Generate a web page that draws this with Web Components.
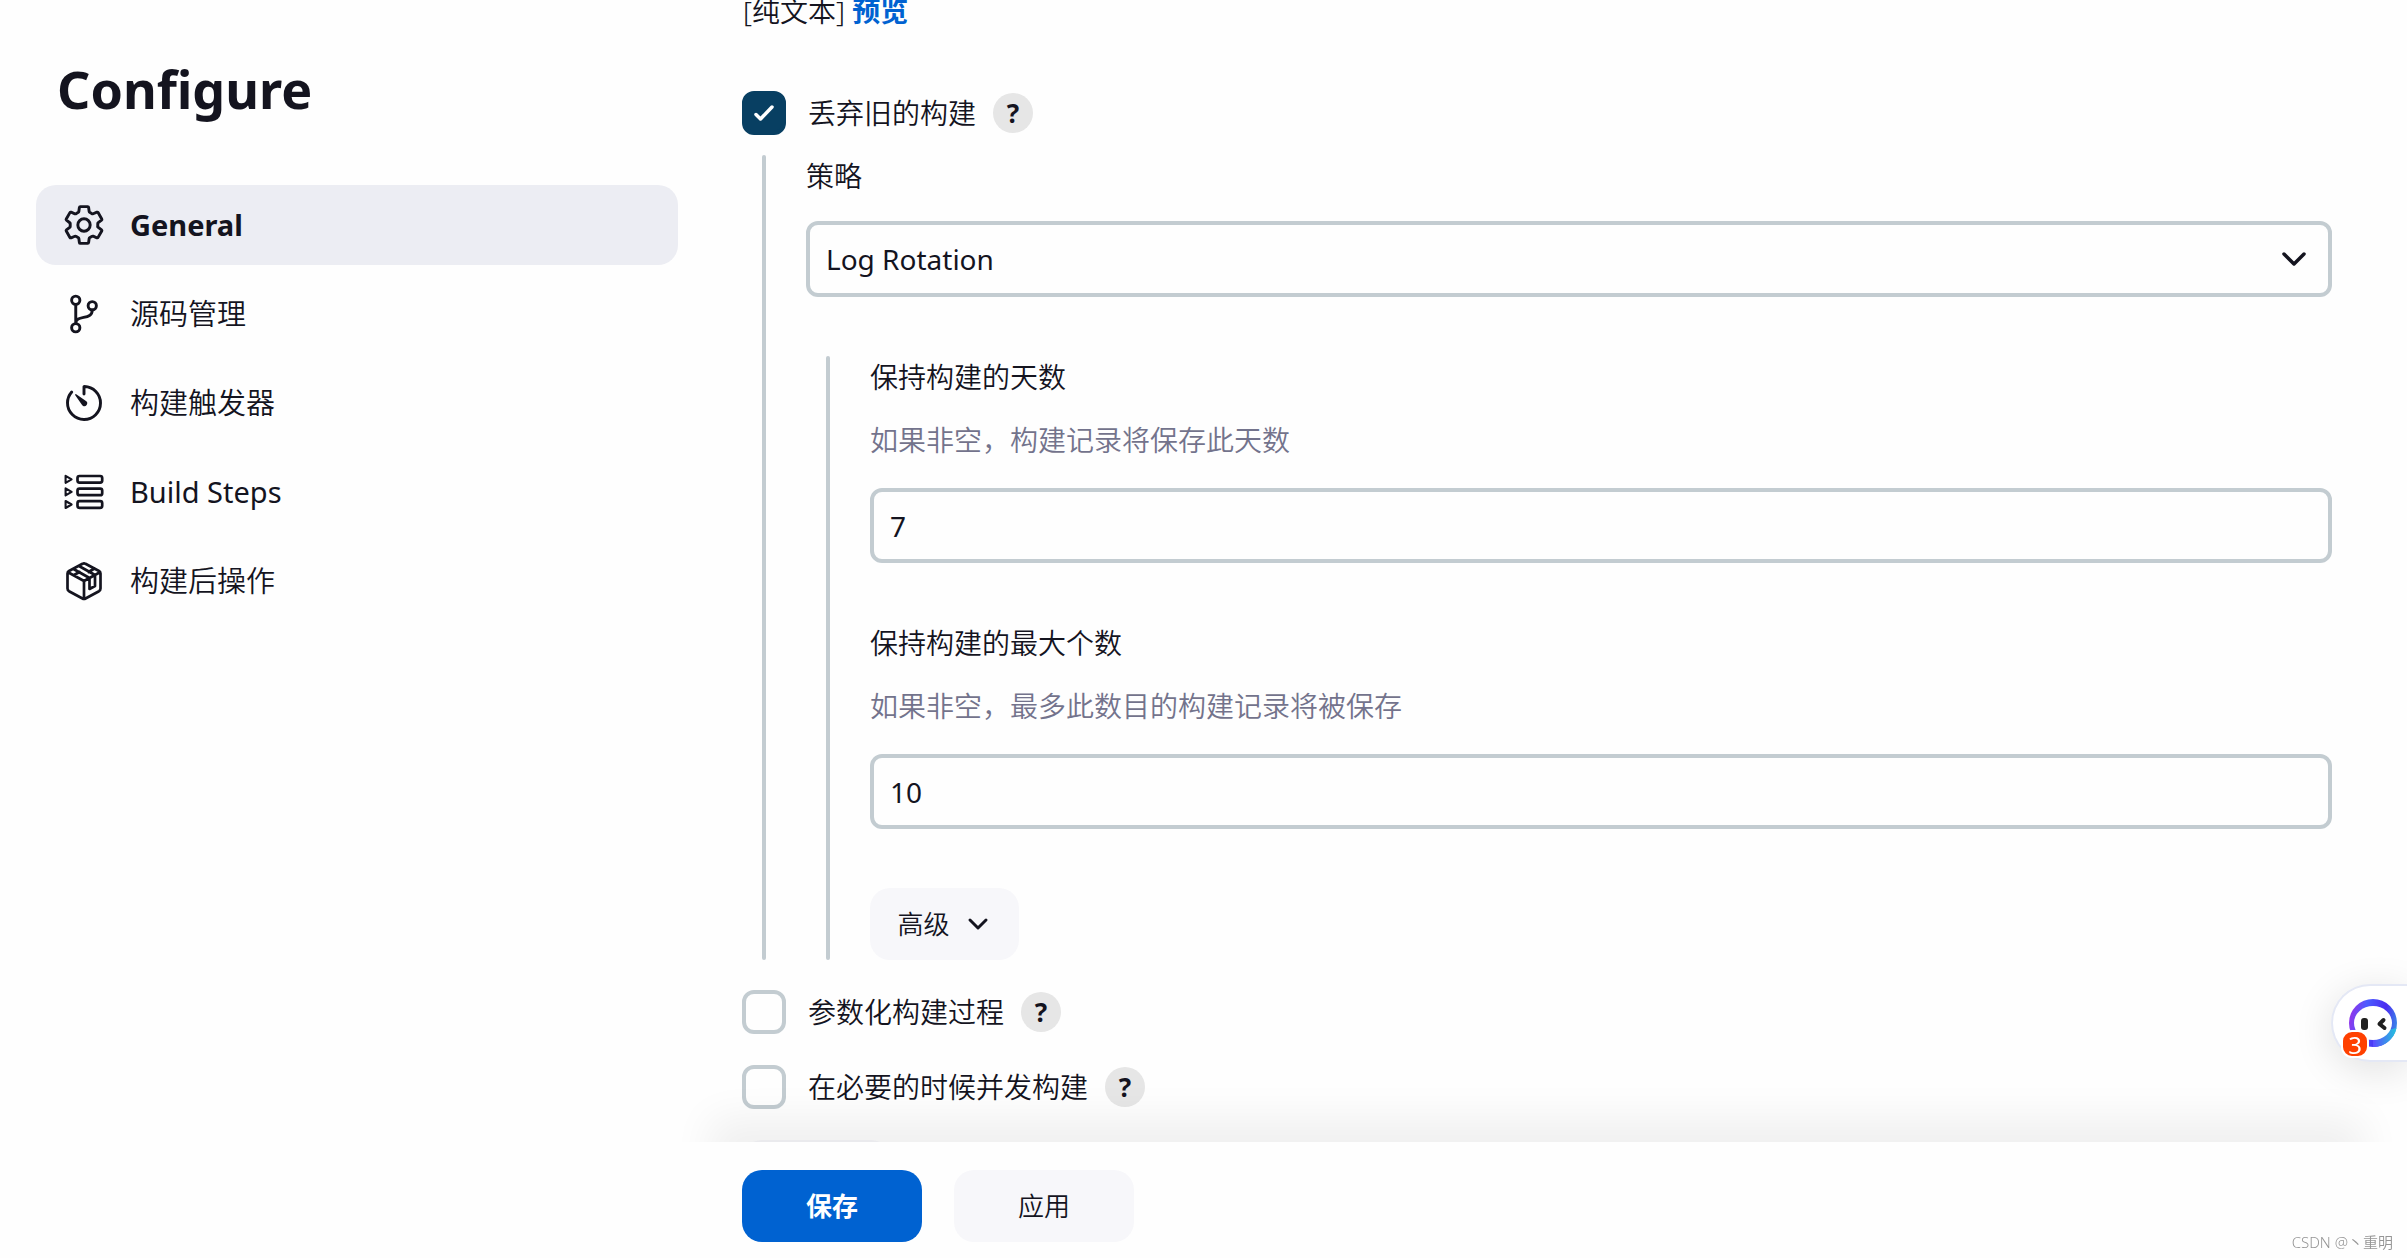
<!DOCTYPE html>
<html lang="zh-CN">
<head>
<meta charset="utf-8">
<title>Configure</title>
<style>
  :root {
    --text: #14141f;
    --muted: #73738c;
    --line: #c3ccd1;
    --accent: #0062d1;
    --soft: #f7f7fa;
  }
  body {
    margin: 0;
    background: #fefefe;
    color: var(--text);
    font: 350 28px/42px "Noto Sans", "Noto Sans CJK SC", sans-serif;
  }
</style>
</head>
<body>
<config-page></config-page>

<template id="config-page">
  <style>
    :host { display: flex; height: 100vh; overflow: hidden; }
    aside { flex: 0 0 642px; padding: 56px 64px 0 36px; }
    h1 { margin: 0 0 64px; padding-left: 21px; font-size: 52px; line-height: 65px; font-weight: 700; }
    nav { display: flex; flex-direction: column; gap: 9px; }
    main { flex: 1; min-width: 0; padding-right: 75px; display: flex; flex-direction: column; }
    form { flex: 1; min-height: 0; overflow: hidden; display: flex; flex-direction: column; }
    .format { line-height: 22px; padding-left: 1px; margin-bottom: 69px; flex: none; }
    .format a { color: var(--accent); font-weight: 700; text-decoration: none; }
    check-row { flex: none; }
    .group { flex: none; margin: 20px 0 30px; }
    .later { flex: none; display: flex; flex-direction: column; align-items: flex-start; gap: 31px; }
  </style>
  <aside>
    <h1>Configure</h1>
    <nav>
      <nav-item current>
        <svg slot="icon" viewBox="0 0 512 512" fill="none" stroke="currentColor" stroke-width="34" stroke-linecap="round" stroke-linejoin="round"><circle cx="256" cy="256" r="72"/><path d="M416.4 256a154 154 0 01-1.5 20.8l45.2 35.5a10.8 10.8 0 012.4 13.7l-42.8 74a10.8 10.8 0 01-13.1 4.6l-44.9-18.1a16 16 0 00-15.2 1.8A164 164 0 01325 400.8a16 16 0 00-8.8 12.1l-6.7 47.9a11 11 0 01-10.7 9.2h-85.5a11 11 0 01-10.7-8.9l-6.7-47.8a16 16 0 00-9-12.2 155 155 0 01-21.5-12.6 16 16 0 00-15.1-1.7l-44.9 18.1a10.8 10.8 0 01-13.1-4.6l-42.8-74a10.8 10.8 0 012.4-13.7l38.2-30a16 16 0 006-14.1c-.3-4.2-.6-8.3-.6-12.5s.2-8.3.6-12.4a16 16 0 00-6.1-13.9l-38.2-30A10.8 10.8 0 0149.5 186l42.8-74a10.8 10.8 0 0113.1-4.6l44.9 18.1a16 16 0 0015.2-1.8A164 164 0 01187 111.2a16 16 0 008.8-12.1l6.7-47.9A11 11 0 01213.2 42h85.6a11 11 0 0110.7 8.9l6.7 47.8a16 16 0 009 12.2 155 155 0 0121.5 12.6 16 16 0 0015.1 1.7l44.9-18.1a10.8 10.8 0 0113.1 4.6l42.8 74a10.8 10.8 0 01-2.5 13.8l-38.2 30a16 16 0 00-6 14.1c.3 4.1.5 8.3.5 12.4z"/></svg>
        General</nav-item>
      <nav-item>
        <svg slot="icon" viewBox="0 0 512 512" fill="none" stroke="currentColor" stroke-width="34" stroke-linecap="round"><circle cx="160" cy="96" r="48"/><circle cx="160" cy="416" r="48"/><circle cx="352" cy="160" r="48"/><path d="M160 368V144M352 208c0 128-192 48-192 160"/></svg>
        源码管理</nav-item>
      <nav-item>
        <svg slot="icon" viewBox="0 0 512 512"><path d="M112.9 128A191.9 191.9 0 0064 254c-1.2 106.400 85.700 193.800 192 194 106.200.2 192-85.800 192-192 0-104.500-83.600-189.600-187.500-192a4.400 4.400 0 00-4.500 4.400V152" fill="none" stroke="currentColor" stroke-width="34" stroke-linecap="round"/><path fill="currentColor" d="M233.400 278.600l-79-113a8.100 8.100 0 0111.300-11.300l113 79a32.500 32.500 0 01-37.300 53.300 33 33 0 01-8-8z"/></svg>
        构建触发器</nav-item>
      <nav-item latin>
        <svg slot="icon" viewBox="0 0 44 44" fill="none" stroke="currentColor" stroke-width="2.700" stroke-linejoin="round"><rect x="15.500" y="6" width="24.700" height="6.600" rx="2"/><rect x="15.500" y="18.600" width="24.700" height="6.600" rx="2"/><rect x="15.500" y="31.200" width="24.700" height="6.600" rx="2"/><g stroke-width="2.100"><path d="M3.600 5.800l6 3.500-6 3.500zM3.600 18.400l6 3.500-6 3.500zM3.600 31l6 3.500-6 3.500z"/></g></svg>
        Build Steps</nav-item>
      <nav-item>
        <svg slot="icon" viewBox="0 0 44 44" fill="none" stroke="currentColor" stroke-width="2.700" stroke-linejoin="round" stroke-linecap="round"><path d="M20.500 4.800a3 3 0 013 0L37 12a3 3 0 011.500 2.600v15a3 3 0 01-1.500 2.600L23.500 39.500a3 3 0 01-3 0L7 32.200a3 3 0 01-1.500-2.600v-15A3 3 0 017 12zM6.500 13.500L22 22l15.500-8.500M22 22v17M11.500 10l16 9v11l5.500-3V16L17 7M12 16l5.500-3M26.500 13l6-3.500"/></svg>
        构建后操作</nav-item>
    </nav>
  </aside>
  <main>
    <form>
      <div class="format">[纯文本] <a href="#preview">预览</a></div>
      <check-row checked>丢弃旧的构建</check-row>
      <indent-group class="group">
        <select-field label="策略" value="Log Rotation"></select-field>
        <indent-group>
          <text-field label="保持构建的天数" hint="如果非空，构建记录将保存此天数" value="7"></text-field>
          <text-field label="保持构建的最大个数" hint="如果非空，最多此数目的构建记录将被保存" value="10"></text-field>
          <push-button chevron>高级</push-button>
        </indent-group>
      </indent-group>
      <div class="later">
        <check-row>参数化构建过程</check-row>
        <check-row>在必要的时候并发构建</check-row>
        <push-button chevron></push-button>
      </div>
    </form>
    <save-bar>
      <push-button primary wide>保存</push-button>
      <push-button wide>应用</push-button>
    </save-bar>
  </main>
  <chat-bubble count="3"></chat-bubble>
  <water-mark>CSDN @丶重明</water-mark>
</template>

<template id="nav-item">
  <style>
    :host { display: block; }
    a { display: flex; align-items: center; gap: 24px; height: 80px; box-sizing: border-box; padding: 0 26px; border-radius: 20px; color: inherit; text-decoration: none; font-size: 29px; }
    :host([latin]) a { font-weight: 400; }
    :host([current]) a { background: #ecedf3; font-weight: 700; }
    ::slotted(svg) { width: 44px; height: 44px; flex: none; display: block; }
  </style>
  <a href="#section"><slot name="icon"></slot><span><slot></slot></span></a>
</template>

<template id="check-row">
  <style>
    :host { display: flex; align-items: center; height: 44px; }
    label { display: flex; align-items: center; gap: 22px; }
    .box { display: grid; width: 44px; height: 44px; }
    input, svg { grid-area: 1 / 1; }
    input { appearance: none; margin: 0; box-sizing: border-box; width: 44px; height: 44px; border: 4px solid var(--line); border-radius: 12px; background: #fefefe; }
    input:checked { background: #083f62; border-color: #083f62; }
    svg { width: 44px; height: 44px; visibility: hidden; pointer-events: none; }
    input:checked + svg { visibility: visible; }
    button { margin: 0 0 0 17px; width: 40px; height: 40px; padding: 0; border: 0; border-radius: 50%; background: #e6e6e6; color: var(--text); font: 700 26px/40px "Noto Sans", sans-serif; }
  </style>
  <label><span class="box"><input type="checkbox"><svg viewBox="0 0 44 44" fill="none" stroke="#fff" stroke-width="3.500" stroke-linecap="round" stroke-linejoin="round"><path d="M14 23.500l4.500 4.500L30 16"/></svg></span><span><slot></slot></span></label>
  <button type="button">?</button>
</template>

<template id="indent-group">
  <style>
    :host { display: flex; flex-direction: column; align-items: stretch; gap: 59px; position: relative; padding-left: 64px; }
    :host::before { content: ""; position: absolute; left: 20px; top: 0; bottom: 0; width: 4px; border-radius: 2px; background: var(--line); }
  </style>
  <slot></slot>
</template>

<template id="select-field">
  <style>
    :host { display: block; }
    label { display: block; margin-bottom: 24px; }
    .wrap { display: grid; align-items: center; }
    select, svg { grid-area: 1 / 1; }
    select { appearance: none; width: 100%; height: 76px; box-sizing: border-box; padding: 0 64px 0 16px; border: 4px solid var(--line); border-radius: 12px; background: #fefefe; color: inherit; font: inherit; font-weight: 400; }
    svg { justify-self: end; margin-right: 23px; width: 30px; height: 30px; pointer-events: none; }
  </style>
  <label for="control"></label>
  <div class="wrap"><select id="control"><option></option></select><svg viewBox="0 0 30 30" fill="none" stroke="currentColor" stroke-width="3.500" stroke-linecap="round" stroke-linejoin="round"><path d="M5 10l10 10 10-10"/></svg></div>
</template>

<template id="text-field">
  <style>
    :host { display: block; }
    label { display: block; margin-bottom: 21px; }
    p { margin: 0 0 27px; color: var(--muted); }
    input { display: block; width: 100%; height: 75px; box-sizing: border-box; padding: 0 16px; border: 4px solid var(--line); border-radius: 12px; background: #fefefe; color: inherit; font: inherit; font-weight: 400; }
  </style>
  <label for="control"></label>
  <p id="hint"></p>
  <input id="control" type="text" aria-describedby="hint">
</template>

<template id="push-button">
  <style>
    :host { display: flex; }
    button { display: flex; align-items: center; justify-content: center; gap: 14px; min-width: 149px; height: 72px; padding: 0 26px; border: 0; border-radius: 20px; background: var(--soft); color: inherit; font: inherit; font-size: 26px; }
    :host([wide]) button { min-width: 180px; }
    :host([primary]) button { background: var(--accent); color: #fff; font-weight: 700; }
    svg { display: none; width: 28px; height: 28px; }
    :host([chevron]) svg { display: block; }
  </style>
  <button type="button"><span><slot></slot></span><svg viewBox="0 0 28 28" fill="none" stroke="currentColor" stroke-width="3" stroke-linecap="round" stroke-linejoin="round"><path d="M6 10l8 8 8-8"/></svg></button>
</template>

<template id="save-bar">
  <style>
    :host { display: flex; gap: 32px; padding: 28px 0 16px; position: relative; flex: none; }
    :host::before { content: ""; position: absolute; inset: 0 -32px; box-shadow: 0 -24px 40px rgba(0, 0, 0, .06); clip-path: inset(-80px -80px 100% -80px); pointer-events: none; }
  </style>
  <slot></slot>
</template>

<template id="chat-bubble">
  <style>
    :host { position: fixed; right: 0; bottom: 196px; }
    button { position: relative; display: flex; align-items: center; box-sizing: border-box; width: 76px; height: 78px; padding: 0 0 0 15px; border: 2px solid #e4e8f5; border-right: 0; border-radius: 39px 0 0 39px; background: #fff; box-shadow: 0 8px 40px rgba(0, 0, 0, .12); }
    svg { width: 50px; height: 50px; flex: none; }
    span { position: absolute; left: 8px; bottom: 2px; width: 24px; height: 24px; border: 2px solid #fff; border-radius: 11px; background: #ff4000; color: #fff; font: 24px/26px "Noto Sans", sans-serif; text-align: center; }
  </style>
  <button type="button">
    <svg viewBox="0 0 50 50"><defs><linearGradient id="ring" x1="0" y1=".4" x2="1" y2=".6"><stop offset="0" stop-color="#9333ea"/><stop offset=".3" stop-color="#4b5cff"/><stop offset=".7" stop-color="#4a2bf0"/><stop offset="1" stop-color="#3b8be8"/></linearGradient><linearGradient id="low" x1="0" y1="0" x2="1" y2="0"><stop offset="0" stop-color="#5b4bff"/><stop offset="1" stop-color="#22c4dc"/></linearGradient></defs><circle cx="25" cy="25" r="24" fill="url(#ring)"/><path d="M25 49a24 24 0 0023.500-19L40 32 25 40z" fill="url(#low)"/><ellipse cx="25" cy="25" rx="19" ry="17" fill="#fff"/><rect x="13" y="20" width="7" height="12" rx="3" fill="#1f1f1f"/><path d="M35.500 22l-4 4 5 4" fill="none" stroke="#1f1f1f" stroke-width="4" stroke-linecap="round" stroke-linejoin="round"/></svg>
    <span></span>
  </button>
</template>

<template id="water-mark">
  <style>
    :host { position: fixed; right: 14px; bottom: 6px; font-size: 15px; line-height: 20px; color: #959595; }
  </style>
  <slot></slot>
</template>

<script>
  class TemplateElement extends HTMLElement {
    constructor() {
      super();
      const root = this.attachShadow({ mode: "open" });
      root.append(document.getElementById(this.localName).content.cloneNode(true));
    }
    part$(selector) { return this.shadowRoot.querySelector(selector); }
  }
  customElements.define("nav-item", class extends TemplateElement {});
  customElements.define("indent-group", class extends TemplateElement {});
  customElements.define("push-button", class extends TemplateElement {});
  customElements.define("save-bar", class extends TemplateElement {});
  customElements.define("water-mark", class extends TemplateElement {});
  customElements.define("check-row", class extends TemplateElement {
    connectedCallback() { this.part$("input").checked = this.hasAttribute("checked"); }
  });
  customElements.define("select-field", class extends TemplateElement {
    connectedCallback() {
      this.part$("label").textContent = this.getAttribute("label");
      this.part$("option").textContent = this.getAttribute("value");
    }
  });
  customElements.define("text-field", class extends TemplateElement {
    connectedCallback() {
      this.part$("label").textContent = this.getAttribute("label");
      this.part$("p").textContent = this.getAttribute("hint");
      this.part$("input").value = this.getAttribute("value");
    }
  });
  customElements.define("chat-bubble", class extends TemplateElement {
    connectedCallback() { this.part$("span").textContent = this.getAttribute("count"); }
  });
  customElements.define("config-page", class extends TemplateElement {});
</script>
</body>
</html>
